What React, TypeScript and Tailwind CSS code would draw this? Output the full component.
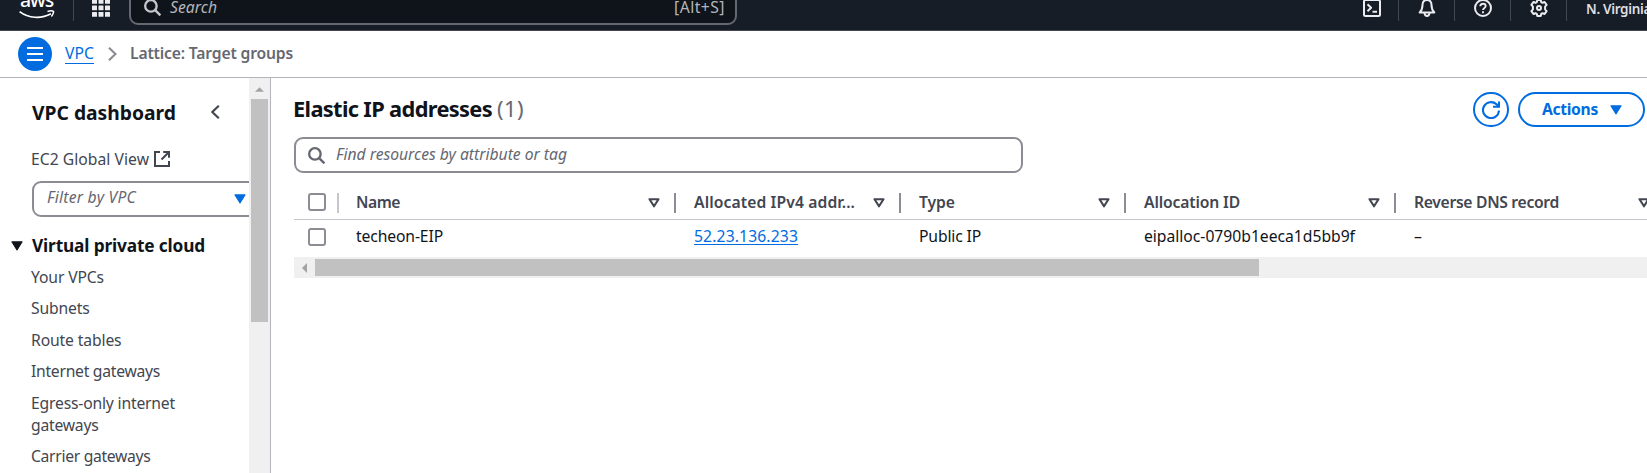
import { useLayoutEffect, useRef, useState } from "react";
import type { ReactNode } from "react";

/* Text whose letter spacing is tuned so that it spans exactly `w` pixels. */
function Fit({ children, w, className = "" }: { children: string; w: number; className?: string }) {
  const ref = useRef<HTMLSpanElement>(null);
  const [spacing, setSpacing] = useState(0);
  useLayoutEffect(() => {
    const natural = ref.current!.getBoundingClientRect().width;
    setSpacing((w - natural) / children.length);
  }, [children, w]);
  return (
    <span ref={ref} className={`inline-block shrink-0 whitespace-nowrap ${className}`} style={{ letterSpacing: `${spacing}px` }}>
      {children}
    </span>
  );
}

function SearchIcon({ className }: { className: string }) {
  return (
    <svg viewBox="0 0 16 16" className={className} fill="none" stroke="currentColor" strokeWidth="2.2">
      <circle cx="6.5" cy="6.5" r="5.4" />
      <path d="m10.5 10.5 4.900 4.900" />
    </svg>
  );
}

function Caret({ className }: { className: string }) {
  return (
    <svg viewBox="0 0 12 10" className={className} fill="currentColor" stroke="currentColor" strokeWidth="1" strokeLinejoin="round">
      <path d="M.8.8h10.4L6 9.2Z" />
    </svg>
  );
}

function SortIcon() {
  return (
    <svg viewBox="0 0 12 10" className="h-[10px] w-[12px] shrink-0 text-[#424650]" fill="none" stroke="currentColor" strokeWidth="2.1" strokeLinejoin="round">
      <path d="M1.500 1.200h9L6 8.300Z" />
    </svg>
  );
}

function HeaderButton({ children, className }: { children: ReactNode; className: string }) {
  return (
    <div className={`flex h-[27px] shrink-0 items-center justify-center border-r border-[#424650] ${className}`}>
      <svg viewBox="0 0 18 18" className="size-[18px] shrink-0 text-[#ebebf0]" fill="none" stroke="currentColor" strokeWidth="2" strokeLinejoin="round">
        {children}
      </svg>
    </div>
  );
}

function TopBar() {
  return (
    <header className="flex h-[31px] items-end overflow-hidden bg-[#161d26]">
      <div className="flex h-[46px] w-full shrink-0 items-center border-b border-[#424650]">
        <div className="flex w-[73px] shrink-0 flex-col items-center self-start pt-[5px] text-white">
          <Fit w={33} className="text-[19.500px] leading-[20px] font-medium">aws</Fit>
          <svg viewBox="0 0 36 10" className="h-[10px] w-[36px]" fill="none" stroke="currentColor" strokeWidth="1.7">
            <path d="M.6 1.600C9.500 8.400 22 9.200 32 3.800" />
            <path d="M28.500 1.400c4.500-1 6.800-.6 5.900 1.200-.4 1.500-1 2.700-2 3.900" strokeWidth="1.500" />
          </svg>
        </div>
        <div className="h-[27px] w-px shrink-0 bg-[#424650]" />
        <svg viewBox="0 0 18 18" className="ml-[18px] size-[18px] shrink-0 text-[#ebebf0]" fill="currentColor">
          {[0, 6.5, 13].map((y) => [0, 6.5, 13].map((x) => <rect key={`${x}-${y}`} x={x} y={y} width="5" height="4.800" rx=".6" />))}
        </svg>
        <div className="ml-[19px] flex h-[35px] w-[608px] shrink-0 items-center rounded-[9px] border-2 border-[#656871] bg-[#0f141a] pr-[10px] pl-[13px] text-[#b4b4bb]">
          <SearchIcon className="size-[17px] shrink-0 text-[#c6c6cd]" />
          <Fit w={47} className="-mt-[1px] ml-[9px] text-[15.7px] leading-[20px] italic">Search</Fit>
          <Fit w={51} className="-mt-[2px] ml-auto text-[15.7px] leading-[20px]">[Alt+S]</Fit>
        </div>
        <div className="ml-auto flex items-center">
          <HeaderButton className="w-[56px] pl-[2px]">
            <rect x="1" y="1" width="16" height="16" rx="1.500" />
            <path d="m4.500 5.300 3.600 3.500-3.600 3.500M9.500 12.700h4.500" />
          </HeaderButton>
          <HeaderButton className="w-[56px]">
            <path d="M9 1C6 1 4.500 3.200 4.500 6c0 3.500-.8 5.400-2.800 7.500h14.600C14.300 11.400 13.500 9.500 13.500 6c0-2.800-1.500-5-4.500-5Z" />
            <path d="M6.500 14c.2 2 1.100 3 2.500 3s2.300-1 2.500-3" />
          </HeaderButton>
          <HeaderButton className="w-[56px]">
            <circle cx="9" cy="9" r="8" />
            <path d="M6.300 7.300C6.300 5.600 7.400 4.700 9 4.700s2.700 1 2.700 2.400C11.700 9 9 8.900 9 11.100M9 12.200v2" strokeWidth="1.900" />
          </HeaderButton>
          <HeaderButton className="w-[56px]">
            <path d="M7.300 1h3.400l.5 2.100 1.300.7 2.100-.8 2 2.900-1.500 1.700v2.800l1.500 1.700-2 2.900-2.100-.8-1.300.7-.5 2.100H7.300l-.5-2.100-1.300-.7-2.100.8-2-2.900 1.500-1.700V7.600L1.400 5.900l2-2.900 2.100.8 1.300-.7Z" />
            <circle cx="9" cy="9" r="2" />
          </HeaderButton>
          <div className="w-[80px] overflow-hidden pl-[19px]">
            <Fit w={65} className="-mt-[3px] block text-[13.500px] leading-[20px] font-semibold text-[#dedee3]">N. Virginia</Fit>
          </div>
        </div>
      </div>
    </header>
  );
}

function Breadcrumbs() {
  return (
    <nav className="flex h-[47px] shrink-0 items-center border-b border-[#b4b4bb] bg-white pl-[18px] text-[15.7px] leading-[22px]">
      <button className="flex size-[34px] shrink-0 items-center justify-center rounded-full bg-[#006ce0] text-white">
        <svg viewBox="0 0 16 16" className="size-[16px]" stroke="currentColor" strokeWidth="2">
          <path d="M0 2h16M0 8h16M0 14h16" />
        </svg>
      </button>
      <a className="ml-[13px] flex h-[20px] border-b border-[#006ce0] text-[#006ce0]">
        <Fit w={29} className="-mt-[2px]">VPC</Fit>
      </a>
      <svg viewBox="0 0 9 14" className="ml-[14px] h-[14px] w-[9px]" fill="none" stroke="#8c8c94" strokeWidth="2.200">
        <path d="m1 .8 6.500 6.200L1 13.200" />
      </svg>
      <Fit w={163} className="-mt-[2px] ml-[13px] font-semibold text-[#656871]">Lattice: Target groups</Fit>
    </nav>
  );
}

const links: { lines: string[]; widths: number[] }[] = [
  { lines: ["Your VPCs"], widths: [73] },
  { lines: ["Subnets"], widths: [58.5] },
  { lines: ["Route tables"], widths: [90.5] },
  { lines: ["Internet gateways"], widths: [129] },
  { lines: ["Egress-only internet", "gateways"], widths: [144, 67.5] },
  { lines: ["Carrier gateways"], widths: [119.5] },
];

function Sidebar() {
  return (
    <aside className="flex w-[271px] shrink-0 overflow-hidden border-r border-[#b4b4bb]">
      <div className="w-[249px] shrink-0 overflow-hidden pt-[23px] text-[15.7px] leading-[22.4px] text-[#424650]">
        <div className="flex items-center pl-[32px]">
          <Fit w={144} className="text-[19.300px] leading-[24px] font-bold text-[#0f141a]">VPC dashboard</Fit>
          <svg viewBox="0 0 9 14" className="-mt-[2px] ml-[35px] h-[14px] w-[9px]" fill="none" stroke="#424650" strokeWidth="2.200">
            <path d="M7.800.8 1.300 7l6.500 6.200" />
          </svg>
        </div>
        <div className="mt-[23px] flex items-center pl-[31px]">
          <Fit w={118}>EC2 Global View</Fit>
          <svg viewBox="0 0 16 16" className="ml-[5px] size-[16px]" fill="none" stroke="currentColor" strokeWidth="2">
            <path d="M6 1H1v14h14v-5M9.200 1H15v5.800M15 1 7.500 8.500" />
          </svg>
        </div>
        <div className="mt-[10.600px] ml-[32px] flex h-[36px] w-[240px] items-center rounded-[9px] border-2 border-[#8c8c94] pl-[13px]">
          <Fit w={89} className="-mt-[3px] text-[#656871] italic">Filter by VPC</Fit>
          <Caret className="ml-[98px] h-[10px] w-[12px] shrink-0 text-[#006ce0]" />
        </div>
        <div className="mt-[18px] flex items-center pl-[11px] text-[#0f141a]">
          <Caret className="h-[10px] w-[12px]" />
          <Fit w={173} className="ml-[9px] text-[17.300px] leading-[22px] font-bold">Virtual private cloud</Fit>
        </div>
        <ul className="mt-[9px] flex flex-col gap-[9px] pl-[31px]">
          {links.map((l) => (
            <li key={l.lines[0]} className="flex flex-col items-start">
              {l.lines.map((t, i) => (
                <Fit key={t} w={l.widths[i]}>{t}</Fit>
              ))}
            </li>
          ))}
        </ul>
      </div>
      <div className="flex w-[21px] shrink-0 flex-col bg-[#f0f0f0] pl-[2px]">
        <svg viewBox="0 0 10 5" className="mt-[9px] ml-[4px] h-[5px] w-[9px]" fill="#a3a3a3">
          <path d="M5 0l5 5H0Z" />
        </svg>
        <div className="mt-[7px] h-[223px] w-[17px] bg-[#c1c1c1]" />
      </div>
    </aside>
  );
}

function Checkbox() {
  return <span className="block size-[18px] shrink-0 rounded-[3px] border-2 border-[#8c8c94] bg-white" />;
}

const columns = [
  { title: "Name", tw: 44, value: "techeon-EIP", vw: 87, col: "w-[337px]", pad: "pl-[17px]" },
  { title: "Allocated IPv4 addr...", tw: 161, value: "52.23.136.233", vw: 104, col: "w-[225px]", pad: "pl-[18px]", link: true },
  { title: "Type", tw: 36, value: "Public IP", vw: 62, col: "w-[225px]", pad: "pl-[18px]" },
  { title: "Allocation ID", tw: 96, value: "eipalloc-0790b1eeca1d5bb9f", vw: 211, col: "w-[270px]", pad: "pl-[18px]" },
  { title: "Reverse DNS record", tw: 145, value: "–", vw: 8, col: "w-[270px]", pad: "pl-[18px]" },
];

function Table() {
  return (
    <div className="mt-[11px] w-[1353px] overflow-hidden text-[15.7px] leading-[22px]">
      <div className="flex h-[36px] items-center border-b border-[#c6c6cd]">
        <div className="mt-px flex w-[43px] shrink-0 pl-[14px]">
          <Checkbox />
        </div>
        <div className="mt-[3px] h-[20px] w-[2px] shrink-0 bg-[#c6c6cd]" />
        {columns.map((c) => (
          <div key={c.title} className={`mt-[3px] flex h-[20px] shrink-0 items-center justify-between border-r-2 border-[#8c8c94] pr-[14px] ${c.pad} ${c.col}`}>
            <Fit w={c.tw} className="-mt-[2px] font-semibold text-[#424650]">{c.title}</Fit>
            <SortIcon />
          </div>
        ))}
      </div>
      <div className="flex h-[37px] items-start pt-[5px]">
        <div className="flex w-[45px] shrink-0 pt-[3px] pl-[14px]">
          <Checkbox />
        </div>
        {columns.map((c) => (
          <div key={c.title} className={`shrink-0 text-[#0f141a] ${c.pad} ${c.col}`}>
            <Fit w={c.vw} className={c.link ? "text-[#006ce0] underline decoration-1 underline-offset-[2px]" : ""}>{c.value}</Fit>
          </div>
        ))}
      </div>
      <div className="flex h-[21px] items-center bg-[#f0f0f0] pl-[8px]">
        <svg viewBox="0 0 5 10" className="h-[10px] w-[5px]" fill="#a3a3a3">
          <path d="M5 0v10L0 5Z" />
        </svg>
        <div className="ml-[8px] h-[17px] w-[944px] bg-[#c1c1c1]" />
      </div>
    </div>
  );
}

function Main() {
  return (
    <main className="min-w-0 flex-1 overflow-hidden pt-[14px] pl-[23px]">
      <div className="flex h-[35px] items-center">
        <div className="-mt-[2px] flex">
          <Fit w={199} className="-ml-px text-[21.800px] leading-[28px] font-bold text-[#0f141a]">Elastic IP addresses</Fit>
          <Fit w={27} className="ml-[5px] text-[21.800px] leading-[28px] text-[#656871]">(1)</Fit>
        </div>
        <button className="ml-auto flex h-[35px] w-[36px] shrink-0 items-center justify-center rounded-full border-2 border-[#006ce0] text-[#006ce0]">
          <svg viewBox="0 0 18 18" className="size-[18px]" fill="none" stroke="currentColor" strokeWidth="2.100">
            <path d="M17 9.500a8 8 0 1 1-2.500-6.200L16.800 5.500" />
            <path d="M17 .5v5.300h-6" />
          </svg>
        </button>
        <button className="mr-[2px] ml-[9px] flex h-[35px] w-[127px] shrink-0 items-center rounded-full border-2 border-[#006ce0] pl-[22px] text-[#006ce0]">
          <Fit w={56} className="-mt-[2px] text-[15.7px] leading-[22px] font-bold">Actions</Fit>
          <Caret className="ml-[12px] h-[10px] w-[12px]" />
        </button>
      </div>
      <div className="mt-[10px] flex h-[36px] w-[729px] items-center rounded-[9px] border-2 border-[#8c8c94] pl-[12px] text-[#656871]">
        <SearchIcon className="size-[17px] shrink-0" />
        <Fit w={231} className="-mt-[2px] ml-[11px] text-[15.7px] leading-[22px] italic">Find resources by attribute or tag</Fit>
      </div>
      <Table />
    </main>
  );
}

export default function App() {
  return (
    <div className="flex h-[473px] w-[1647px] flex-col overflow-hidden bg-white font-['Noto_Sans','Open_Sans',sans-serif]">
      <TopBar />
      <Breadcrumbs />
      <div className="flex min-h-0 flex-1">
        <Sidebar />
        <Main />
      </div>
    </div>
  );
}
